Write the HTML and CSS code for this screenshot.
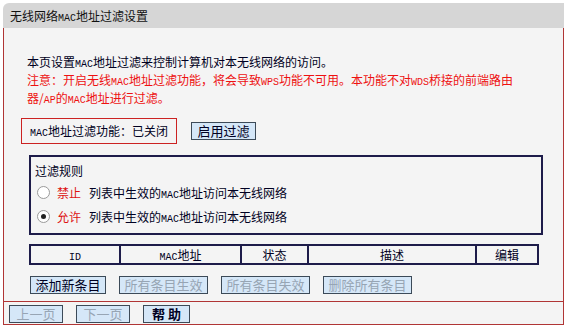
FILE: index.html
```html
<!DOCTYPE html>
<html lang="zh-CN">
<head>
    <meta charset="UTF-8">
    <title>无线网络MAC地址过滤设置</title>
    <link rel="stylesheet" href="styles.css">
</head>
<body>
    <div class="panel">
        <div class="panel-title">无线网络<span class="en">MAC</span>地址过滤设置</div>
        <div class="panel-body">
            <div class="main">
                <div class="intro">
                    <p>本页设置<span class="en">MAC</span>地址过滤来控制计算机对本无线网络的访问。</p>
                    <p class="warn">注意：开启无线<span class="en">MAC</span>地址过滤功能，将会导致<span class="en">WPS</span>功能不可用。本功能不对<span class="en">WDS</span>桥接的前端路由</p>
                    <p class="warn">器/<span class="en">AP</span>的<span class="en">MAC</span>地址进行过滤。</p>
                </div>

                <div class="status-row">
                    <div class="status-box"><span class="en">MAC</span>地址过滤功能：已关闭</div>
                    <button class="btn btn-enable">启用过滤</button>
                </div>

                <div class="rules">
                    <div class="rules-title">过滤规则</div>
                    <label class="rule">
                        <span class="radio"></span>
                        <span class="rule-key">禁止</span>
                        <span>列表中生效的<span class="en">MAC</span>地址访问本无线网络</span>
                    </label>
                    <label class="rule">
                        <span class="radio checked"></span>
                        <span class="rule-key">允许</span>
                        <span>列表中生效的<span class="en">MAC</span>地址访问本无线网络</span>
                    </label>
                </div>

                <div class="list-head">
                    <div class="col"><span class="en">ID</span></div>
                    <div class="col"><span class="en">MAC</span>地址</div>
                    <div class="col">状态</div>
                    <div class="col">描述</div>
                    <div class="col">编辑</div>
                </div>

                <div class="actions">
                    <button class="btn btn-add">添加新条目</button>
                    <button class="btn btn-all disabled">所有条目生效</button>
                    <button class="btn btn-all disabled">所有条目失效</button>
                    <button class="btn btn-all disabled">删除所有条目</button>
                </div>
            </div>

            <div class="footer">
                <button class="btn disabled btn-page">上一页</button>
                <button class="btn disabled btn-page">下一页</button>
                <button class="btn btn-help">帮 助</button>
            </div>
        </div>
    </div>
</body>
</html>
```

FILE: styles.css
```css
body {
    margin: 0;
    background-color: #ffffff;
    font-family: "Noto Sans CJK SC", "Liberation Sans", sans-serif;
    font-size: 12px;
    color: #000022;
}
p {
    margin: 0;
}
.en {
    font-family: "Liberation Mono", monospace;
    font-size: 10px;
    line-height: 1;
}
.panel {
    margin: 3px 0 0 3px;
    width: 561px;
}
.panel-title {
    height: 25px;
    line-height: 25px;
    padding-left: 7px;
    background-color: #d6d6d6;
    border-top-left-radius: 6px;
    color: #111111;
}
.panel-body {
    background-color: #f4f4f4;
    border-left: 1px solid #b03535;
    border-right: 1px solid #b03535;
    border-bottom: 1px solid #b03535;
}
.main {
    padding: 25px 0 7px 17px;
}
.intro {
    margin-left: 6px;
    line-height: 18px;
}
.intro p {
    height: 18px;
}
.warn {
    color: #ee1111;
}
.status-row {
    display: flex;
    align-items: center;
    gap: 14px;
    margin-top: 11px;
}
.status-box {
    width: 146px;
    height: 24px;
    line-height: 24px;
    padding-left: 8px;
    border: 1px solid #cc2222;
}
.btn {
    box-sizing: border-box;
    height: 18px;
    padding: 0;
    font-family: "Noto Sans CJK SC", sans-serif;
    font-size: 13px;
    line-height: 16px;
    white-space: nowrap;
    color: #000022;
    background-color: #d5e7f8;
    border: 1px solid #3c4a58;
    border-radius: 0;
    cursor: pointer;
}
.btn-enable {
    width: 65px;
}
.btn-add {
    width: 76px;
}
.btn-all {
    width: 89px;
}
.disabled {
    color: #97a5b4;
}
.rules {
    width: 506px;
    height: 76px;
    margin: 11px 0 0 8px;
    border: 2px solid #1e1c4a;
    padding-left: 4px;
    box-sizing: content-box;
}
.rules-title {
    height: 18px;
    line-height: 18px;
    margin-top: 5px;
}
.rule {
    display: flex;
    align-items: center;
    height: 24px;
    margin-left: 2px;
}
.radio {
    width: 11px;
    height: 11px;
    border: 1px solid #9a9a9a;
    border-radius: 50%;
    background-color: #ffffff;
    margin-right: 7px;
    position: relative;
}
.radio.checked::after {
    content: "";
    position: absolute;
    left: 3px;
    top: 3px;
    width: 5px;
    height: 5px;
    border-radius: 50%;
    background-color: #222222;
}
.rule-key {
    color: #dd1111;
    margin-right: 8px;
}
.list-head {
    display: grid;
    grid-template-columns: 88px 121px 67px 168px 62px;
    width: 506px;
    margin: 9px 0 0 8px;
    border: 2px solid #1e1c4a;
}
.col {
    height: 17px;
    line-height: 17px;
    text-align: center;
    border-left: 2px solid #1e1c4a;
}
.col:first-child {
    border-left: none;
}
.actions {
    display: flex;
    gap: 13px;
    margin: 11px 0 0 9px;
}
.footer {
    display: flex;
    gap: 13px;
    padding: 3px 0 1px 5px;
    border-top: 1px solid #b03535;
}
.btn-page {
    width: 54px;
}
.btn-help {
    width: 47px;
    font-weight: bold;
}
```
